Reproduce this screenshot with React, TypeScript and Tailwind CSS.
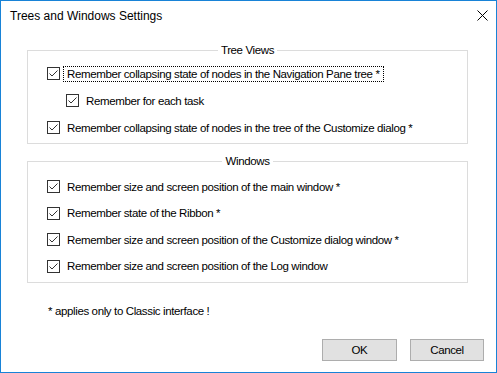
import React from "react";

function Check({ focused = false, label }: { focused?: boolean; label: string }) {
  return (
    <div className="flex items-center">
      <svg width="13" height="13" viewBox="0 0 13 13" className="shrink-0">
        <rect x="0.5" y="0.5" width="12" height="12" fill="#fff" stroke="#333" />
        <polyline points="2.5,6.5 5,9 10.5,3.5" fill="none" stroke="#333" strokeWidth="1" />
      </svg>
      <span
        className={
          "ml-[3px] px-[3px] h-[16px] leading-[14px] border whitespace-nowrap " +
          (focused ? "border-dotted border-black" : "border-transparent")
        }
      >
        {label}
      </span>
    </div>
  );
}

export default function App() {
  return (
    <div
      className="w-[497px] h-[373px] border border-[#1883d7] bg-white flex flex-col text-[11.5px] tracking-[-0.37px] text-black"
      style={{ fontFamily: '"Liberation Sans", Arial, sans-serif' }}
    >
      <div className="h-[30px] flex items-center justify-between pl-[9px] pr-[8px]">
        <span className="text-[12px] tracking-normal leading-[16px]">Trees and Windows Settings</span>
        <svg width="11" height="11" viewBox="0 0 11 11" className="mt-[-2px]">
          <path d="M0.5 0.5 L10.5 10.5 M10.5 0.5 L0.5 10.5" stroke="#000" strokeWidth="1" />
        </svg>
      </div>

      <fieldset className="ml-[26px] w-[441px] mt-[11px] border border-[#dcdcdc]">
        <legend className="mx-auto px-[3px] leading-[16px]">Tree Views</legend>
        <div className="pl-[19px] pt-[2px] pb-[2px]">
          <div className="h-[27px] flex items-center">
            <Check focused label="Remember collapsing state of nodes in the Navigation Pane tree *" />
          </div>
          <div className="h-[27px] flex items-center pl-[19px]">
            <Check label="Remember for each task" />
          </div>
          <div className="h-[27px] flex items-center">
            <Check label="Remember collapsing state of nodes in the tree of the Customize dialog *" />
          </div>
        </div>
      </fieldset>

      <fieldset className="ml-[26px] w-[441px] mt-[9px] border border-[#dcdcdc]">
        <legend className="mx-auto px-[3px] leading-[16px]">Windows</legend>
        <div className="pl-[19px] pt-[4px] pb-[3px]">
          <div className="h-[27px] flex items-center">
            <Check label="Remember size and screen position of the main window *" />
          </div>
          <div className="h-[26px] flex items-center">
            <Check label="Remember state of the Ribbon *" />
          </div>
          <div className="h-[27px] flex items-center">
            <Check label="Remember size and screen position of the Customize dialog window *" />
          </div>
          <div className="h-[26px] flex items-center">
            <Check label="Remember size and screen position of the Log window" />
          </div>
        </div>
      </fieldset>

      <div className="mt-[20px] pl-[47px] leading-[16px]">* applies only to Classic interface !</div>

      <div className="mt-[20px] flex justify-end gap-[13px] pr-[12px]">
        <button className="w-[75px] h-[22px] bg-[#e1e1e1] border border-[#adadad] leading-[20px]">OK</button>
        <button className="w-[74px] h-[22px] bg-[#e1e1e1] border border-[#adadad] leading-[20px]">Cancel</button>
      </div>
    </div>
  );
}
